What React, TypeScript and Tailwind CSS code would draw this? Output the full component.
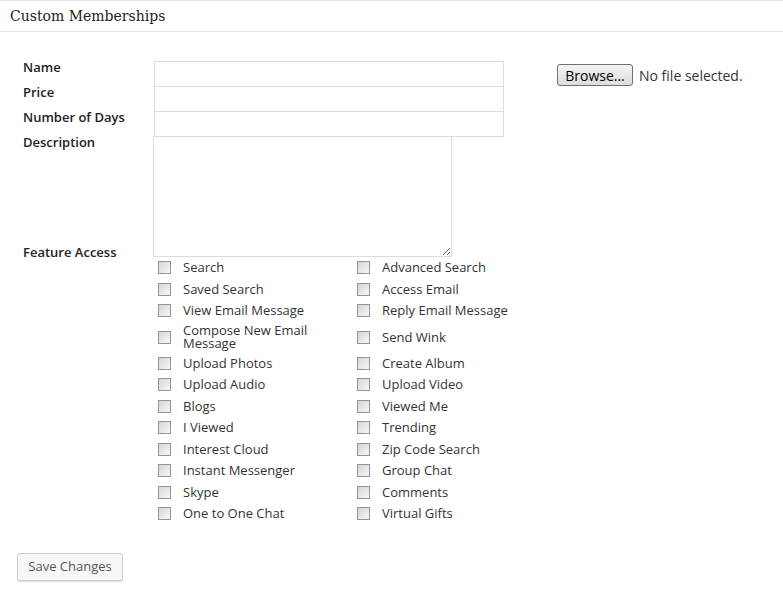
import React from 'react';

const features: [string, string][] = [
  ['Search', 'Advanced Search'],
  ['Saved Search', 'Access Email'],
  ['View Email Message', 'Reply Email Message'],
  ['Compose New Email Message', 'Send Wink'],
  ['Upload Photos', 'Create Album'],
  ['Upload Audio', 'Upload Video'],
  ['Blogs', 'Viewed Me'],
  ['I Viewed', 'Trending'],
  ['Interest Cloud', 'Zip Code Search'],
  ['Instant Messenger', 'Group Chat'],
  ['Skype', 'Comments'],
  ['One to One Chat', 'Virtual Gifts']
];

const Box = () => (
  <span className="ml-[4px] mr-[12px] block h-[13px] w-[13px] shrink-0 border border-[#959595] bg-linear-to-br from-[#d6d6d6] to-[#f7f7f7]" />
);

const FeatureCell = ({ label }: { label: string }) => (
  <label className="flex min-h-[21.5px] items-center py-[2.5px]">
    <Box />
    <span className="leading-[13px] text-[#333]">{label}</span>
  </label>
);

export default function App() {
  return (
    <div className="min-h-[595px] bg-white text-[13px] text-[#333]" style={{ fontFamily: '"Open Sans", sans-serif' }}>
      <div className="flex h-[32px] items-center border-y border-[#e5e5e5] pl-[10px]">
        <h3 className="text-[14px] text-[#222]" style={{ fontFamily: '"DejaVu Serif", serif' }}>
          Custom Memberships
        </h3>
      </div>

      <div className="flex pl-[23px] pt-[26px]">
        <div className="w-[131px] shrink-0 font-semibold text-[#222]">
          <div className="h-[25px] leading-[18px]">Name</div>
          <div className="h-[25px] leading-[18px]">Price</div>
          <div className="h-[25px] leading-[18px]">Number of Days</div>
          <div className="h-[25px] leading-[18px]">Description</div>
          <div className="mt-[85px] leading-[18px]">Feature Access</div>
        </div>

        <div className="flex flex-col pt-[3px]">
          <div className="flex items-start">
            <div className="flex w-[350px] flex-col">
              <input type="text" className="h-[26px] border border-[#dddddd] bg-white outline-none" />
              <input type="text" className="-mt-px h-[26px] border border-[#dddddd] bg-white outline-none" />
              <input type="text" className="-mt-px h-[26px] border border-[#dddddd] bg-white outline-none" />
            </div>
            <div className="ml-[53px] mt-[3px] flex items-center">
              <button
                type="button"
                className="h-[22px] w-[76px] rounded-[3px] border border-[#707070] bg-linear-to-b from-[#f4f4f4] to-[#dcdcdc] text-[14px] text-black"
                style={{ fontFamily: '"Open Sans", sans-serif' }}
              >
                Browse...
              </button>
              <span className="ml-[6px] text-[14px] text-[#333]">No file selected.</span>
            </div>
          </div>

          <textarea className="-ml-px -mt-px h-[121px] w-[299px] border border-[#dddddd] bg-white outline-none" />

          <div className="grid grid-cols-[199px_auto]">
            {features.map(([a, b]) => (
              <React.Fragment key={a}>
                <FeatureCell label={a} />
                <FeatureCell label={b} />
              </React.Fragment>
            ))}
          </div>
        </div>
      </div>

      <div className="pl-[17px] pt-[28px]">
        <button
          type="button"
          className="h-[28px] w-[106px] rounded-[3px] border border-[#cccccc] bg-[#f7f7f7] text-[13px] text-[#555] shadow-[0_1px_0_#e0e0e0]"
        >
          Save Changes
        </button>
      </div>
    </div>
  );
}
